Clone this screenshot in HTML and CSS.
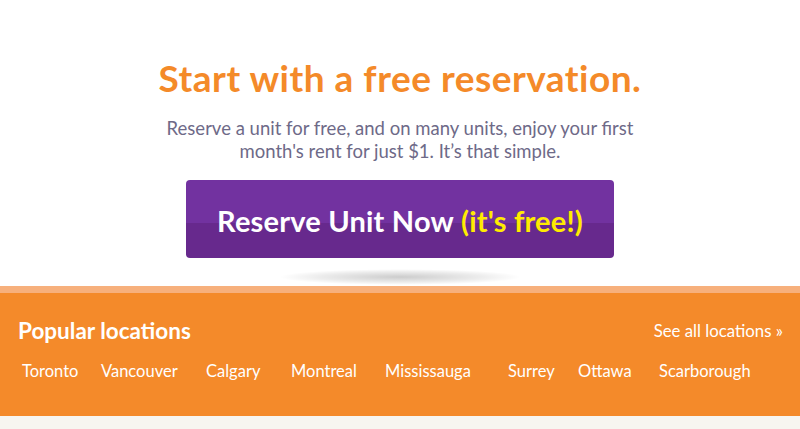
FILE: index.html
```html
<!DOCTYPE html>
<html>
<head>
<meta charset="utf-8">
<link rel="stylesheet" href="styles.css">
</head>
<body>
<section class="hero">
  <h1 class="hero-title">Start with a free reservation.</h1>
  <p class="hero-text">Reserve a unit for free, and on many units, enjoy your first<br>month's rent for just $1. It’s that simple.</p>
  <a class="cta" href="#">Reserve Unit Now <span class="cta-free">(it's free!)</span></a>
  <div class="cta-shadow"></div>
</section>
<section class="locations">
  <div class="loc-head">
    <h2 class="loc-title">Popular locations</h2>
    <a class="loc-all" href="#">See all locations »</a>
  </div>
  <ul class="loc-list">
    <li><a href="#">Toronto</a></li>
    <li><a href="#">Vancouver</a></li>
    <li><a href="#">Calgary</a></li>
    <li><a href="#">Montreal</a></li>
    <li><a href="#">Mississauga</a></li>
    <li><a href="#">Surrey</a></li>
    <li><a href="#">Ottawa</a></li>
    <li><a href="#">Scarborough</a></li>
  </ul>
</section>
<footer class="bottom"></footer>
</body>
</html>
```
FILE: styles.css
```css
html, body {
  margin: 0;
  padding: 0;
  background: #ffffff;
  font-family: Lato, "Open Sans", sans-serif;
}
.hero {
  display: flex;
  flex-direction: column;
  align-items: center;
  padding-top: 57px;
}
.hero-title {
  margin: 0;
  font-size: 37px;
  font-weight: 700;
  color: #f48a29;
  letter-spacing: 0.5px;
  line-height: 42px;
}
.hero-text {
  margin: 18px 0 0;
  font-size: 18.5px;
  line-height: 23px;
  color: #6e6a88;
  text-align: center;
}
.cta {
  flex-shrink: 0;
  margin-top: 17px;
  width: 428px;
  height: 78px;
  display: flex;
  align-items: center;
  justify-content: center;
  padding-top: 3px;
  box-sizing: border-box;
  border-radius: 4px;
  background: linear-gradient(#7232a0 0, #7232a0 55%, #67298d 55%, #67298d 100%);
  color: #ffffff;
  font-size: 29px;
  font-weight: 700;
  text-decoration: none;
  letter-spacing: 0.2px;
}
.cta-free {
  color: #ffeb00;
  margin-left: 7px;
}
.cta-shadow {
  flex-shrink: 0;
  margin-top: 11px;
  width: 244px;
  height: 16px;
  border-radius: 50%;
  background: radial-gradient(ellipse at center, rgba(0,0,0,0.2) 0%, rgba(0,0,0,0.08) 45%, rgba(0,0,0,0) 70%);
}
.locations {
  margin-top: 1px;
  background: #f48a2a;
  border-top: 7px solid #f7b07c;
  height: 123px;
  padding: 0 17px 0 18px;
  color: #ffffff;
}
.loc-head {
  display: flex;
  align-items: center;
  justify-content: space-between;
  padding-top: 6px;
  height: 62px;
}
.loc-title {
  margin: 0;
  font-size: 22.5px;
  font-weight: 700;
}
.loc-all {
  color: #ffffff;
  text-decoration: none;
  font-size: 16.8px;
}
.loc-list {
  list-style: none;
  margin: 0;
  padding: 0 0 0 4px;
  display: grid;
  grid-template-columns: 79px 105px 85px 94px 123px 70px 81px auto;
}
.loc-list a {
  color: #ffffff;
  text-decoration: none;
  font-size: 16.5px;
  line-height: 20px;
}
.bottom {
  background: #f7f5f0;
  height: 13px;
}
```
